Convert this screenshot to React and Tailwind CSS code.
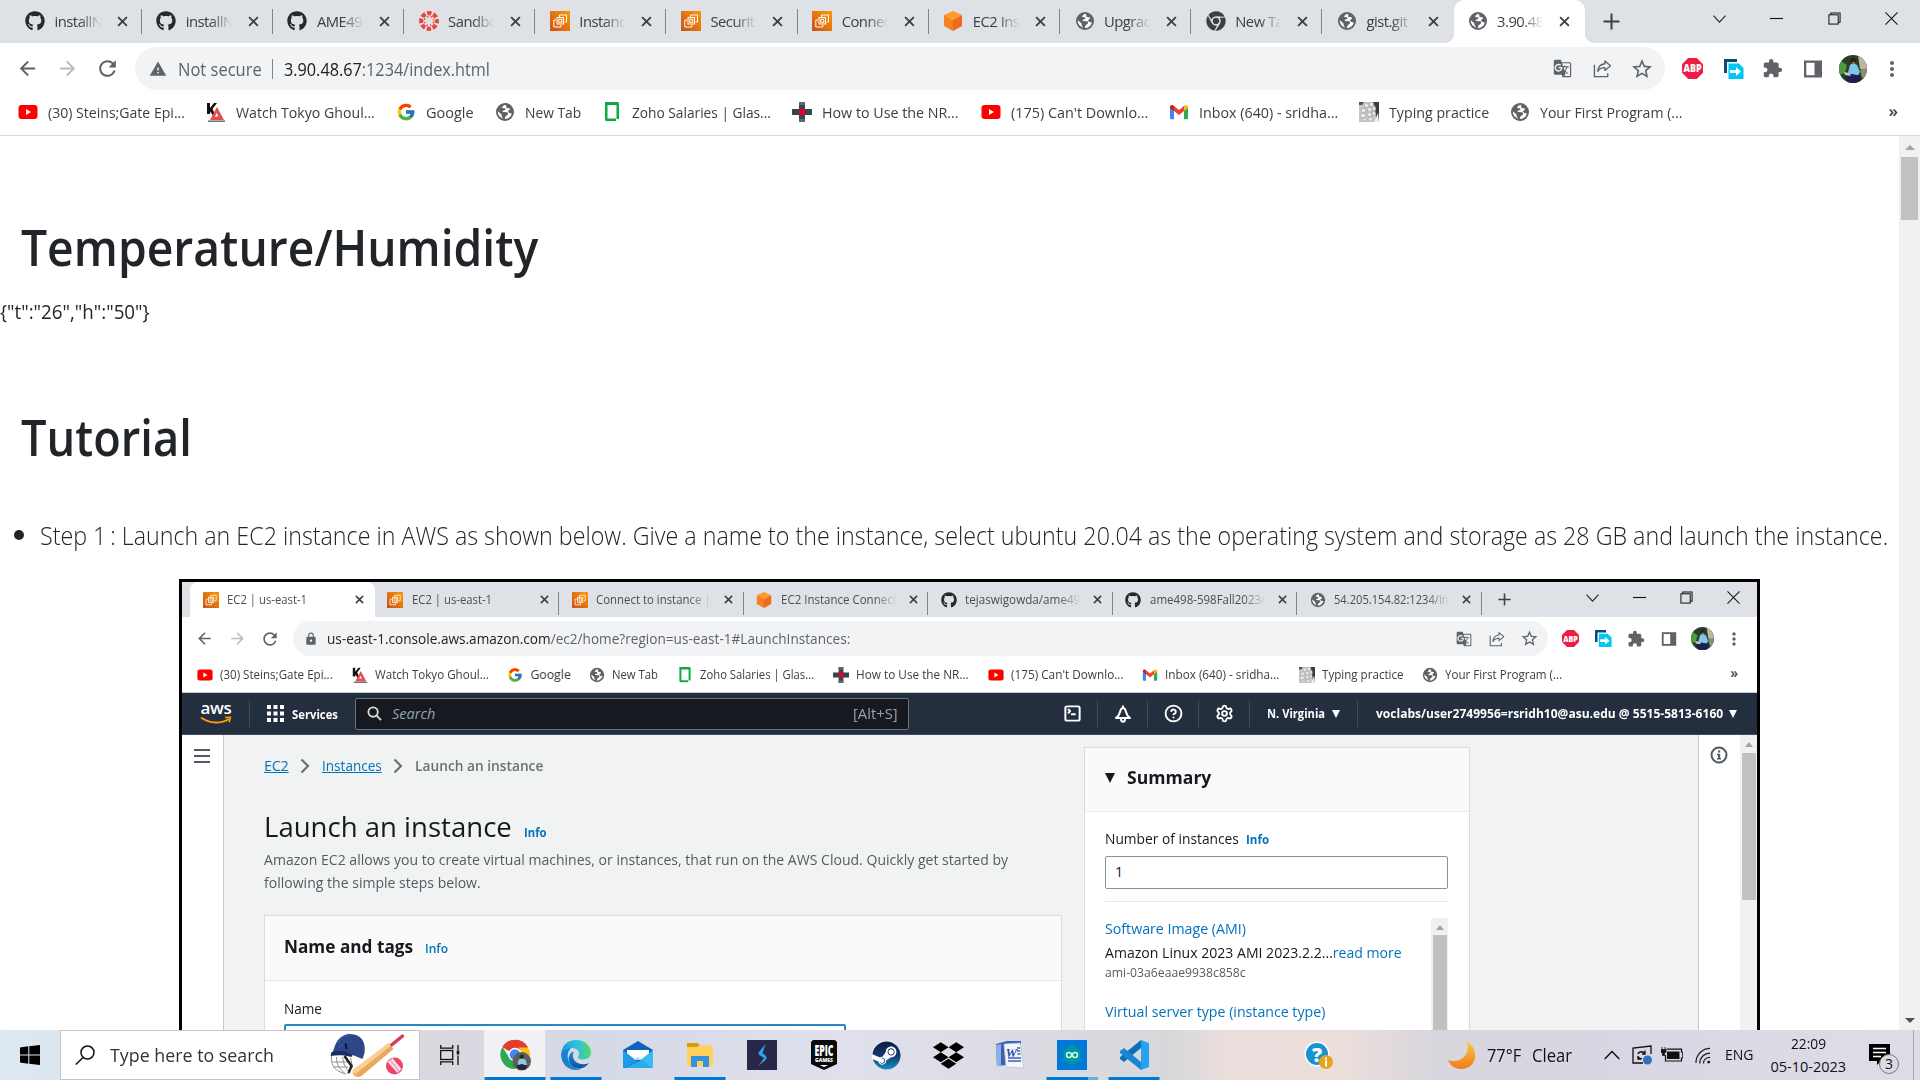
import React, { useLayoutEffect, useRef, useState } from "react";
import { MdArrowBack, MdArrowForward, MdRefresh, MdWarning, MdLock, MdMoreVert, MdStarBorder, MdExtension, MdGTranslate } from "react-icons/md";
import { FaGithub, FaChrome, FaDropbox, FaSteam } from "react-icons/fa";
import { FcGoogle } from "react-icons/fc";
import { SquareTerminal, CircleHelp, Settings } from "lucide-react";

// Single line of text condensed horizontally so that it fills `w` pixels.
function Condensed({ w, className = "", children }) {
  const ref = useRef(null);
  const [scale, setScale] = useState(1);
  useLayoutEffect(() => {
    setScale(w / ref.current.offsetWidth);
  }, [w]);
  return (
    <span className={"inline-block shrink-0 whitespace-pre " + className} style={{ width: w + "px" }}>
      <span ref={ref} className="inline-block origin-left" style={{ transform: "scaleX(" + scale + ")" }}>{children}</span>
    </span>
  );
}

/* ---------- favicons ---------- */
const Globe = ({ className }) => (
  <svg viewBox="0 0 20 20" className={className}>
    <circle cx="10" cy="10" r="9" fill="#5f6368" />
    <path d="M10.6 2.8c-2 .4-3.300 1.600-3.500 3.100l2.600.4c.8.2 1 1.200.3 1.700l-2 .8c-.6.4-.4 1.200.3 1.300l3.600.2c1.400.2 1.700 1.600.7 2.400l-2.200 1.700-.6 2.700c3.200 0 6.300-2.300 7-5.700l-2.400-.3-1.600-1.700 1.900-1.700c.5-.5.2-1.300-.5-1.400l-2.300-.3c-.7-.2-.8-1-.4-1.400z" fill="#fff" />
    <path d="M2.800 9.300l3.700 3.200.3 2.200 1.500 1.900c-3.200-.8-5.600-3.700-5.500-7.300z" fill="#fff" />
  </svg>
);
const Ec2 = ({ className }) => (
  <svg viewBox="0 0 20 20" className={className}>
    <defs>
      <linearGradient id="ec2" x1="0" y1="1" x2="1" y2="0">
        <stop offset="0" stopColor="#c8511b" />
        <stop offset="1" stopColor="#f90" />
      </linearGradient>
    </defs>
    <rect width="20" height="20" fill="url(#ec2)" />
    <g fill="none" stroke="#fff" strokeWidth="1">
      <path d="M9.500 6V4h7v7h-2" />
      <rect x="7" y="6.500" width="6.500" height="6.500" />
      <rect x="8.800" y="8.300" width="3" height="3" />
      <path d="M6 9H3.800v7h7v-2" />
    </g>
  </svg>
);
const Canvas = ({ className }) => (
  <svg viewBox="0 0 20 20" className={className}>
    <circle cx="10" cy="10" r="7.800" fill="none" stroke="#e8453c" strokeWidth="4.200" strokeDasharray="4.300 1.830" strokeDashoffset="2.100" />
    <circle cx="10" cy="10" r="4.600" fill="none" stroke="#e8453c" strokeWidth="1.400" strokeDasharray="1.400 2.210" strokeDashoffset="-1" />
  </svg>
);
const Cube = ({ className }) => (
  <svg viewBox="0 0 20 20" className={className}>
    <path d="M10 0l9 4-9 5-9-5z" fill="#ff9a2b" />
    <path d="M1 4l9 5v11l-9-5z" fill="#f58220" />
    <path d="M19 4l-9 5v11l9-5z" fill="#ef6a1b" />
  </svg>
);
const Youtube = ({ className }) => (
  <svg viewBox="0 0 20 20" className={className}>
    <rect x="0.500" y="3" width="19" height="14" rx="3" fill="#f00" />
    <path d="M8 7l5 3-5 3z" fill="#fff" />
  </svg>
);
const Ghoul = ({ className }) => (
  <svg viewBox="0 0 20 20" className={className}>
    <path d="M1 1h3v5l4-5h3L6.500 7l3 6H6.500L4.500 9.500 4 12H1z" fill="#111" />
    <path d="M11 5l7 13H4z" fill="#e2504e" />
    <path d="M10.500 11l2 3-3.500 1z" fill="#fff" />
    <path d="M2 18.500h17v1.300H2z" fill="#555" />
  </svg>
);
const Glassdoor = ({ className }) => (
  <svg viewBox="0 0 20 20" className={className}>
    <path d="M3 2v15.500c0 .8.600 1.500 1.500 1.500H14v-2.500H5.500V2z" fill="#0caa41" />
    <path d="M5 0h10.500c.8 0 1.500.7 1.500 1.500V17h-2.500V3H5z" fill="#0caa41" />
    <path d="M3 0h12v2.500H3z" fill="#0caa41" />
  </svg>
);
const Nrf = ({ className }) => (
  <svg viewBox="0 0 20 20" className={className}>
    <path d="M7 0h6v7h7v6h-7v7H7v-7H0V7h7z" fill="#36454f" />
    <path d="M7 0h6v3H7zM7 17h6v3H7z" fill="#5b6b75" />
    <rect x="7" y="7" width="6" height="6" fill="#e4002b" />
  </svg>
);
const Gmail = ({ className }) => (
  <svg viewBox="0 0 20 20" className={className}>
    <path d="M1 5v11c0 .8.500 1.200 1.200 1.200H5V8z" fill="#4285f4" />
    <path d="M19 5v11c0 .8-.5 1.200-1.200 1.200H15V8z" fill="#34a853" />
    <path d="M5 4l5 4 5-4v5l-5 4-5-4z" fill="#ea4335" />
    <path d="M1 5.200C1 3.200 3 2.500 4.300 3.500L5 4v5L1 6z" fill="#c5221f" />
    <path d="M19 5.200c0-2-2-2.700-3.300-1.700L15 4v5l4-3z" fill="#fbbc04" />
  </svg>
);
const Keyboard = ({ className }) => (
  <svg viewBox="0 0 20 20" className={className}>
    <rect width="20" height="20" fill="#c9c9c9" />
    <path d="M14 0h6v20h-2z" fill="#3b3b3b" />
    <path d="M19 11l1 9h-5z" fill="#eee" />
    <path d="M0 0h5L3 3H0z" fill="#555" />
    <g fill="#e8e8e8" stroke="#a0a0a0" strokeWidth=".6">
      <path d="M5 2l4-1 1 4-4 1zM10 1l4-1 1 4-4 1zM2 7l4-1 1 4-4 1zM8 6l4-1 1 4-4 1zM13 5l3-1 1 4-3 1zM1 12l5-1 1 4-5 1zM8 11l4-1 1 4-4 1zM13 10l3-1 1 4-3 1zM3 17l4-1 1 3H3zM9 16l4-1 1 4H9z" />
    </g>
  </svg>
);
const ChromeDark = ({ className }) => <FaChrome className={className} color="#3c4043" />;
const Octocat = ({ className }) => <FaGithub className={className} color="#24292f" />;

/* ---------- chrome pieces ---------- */
const Close = ({ className }) => (
  <svg viewBox="0 0 10 10" className={className}>
    <path d="M1 1l8 8M9 1l-8 8" stroke="#3c4043" strokeWidth="1.700" />
  </svg>
);
const Share = ({ className }) => (
  <svg viewBox="0 0 20 20" className={className} fill="none" stroke="#5f6368" strokeWidth="1.400">
    <path d="M1.500 6v12.500h14V15" />
    <path d="M12.500 2l6 5-6 5V9C9 9 6.500 10.500 5 13c.3-4.500 3-7.500 7.500-8z" strokeLinejoin="round" />
  </svg>
);
const Abp = ({ className }) => (
  <svg viewBox="0 0 22 22" className={className}>
    <path d="M6.500 0h9L22 6.500v9L15.500 22h-9L0 15.500v-9z" fill="#ed1e45" />
    <text x="11" y="15" textAnchor="middle" fontFamily="Open Sans" fontWeight="800" fontSize="11" textLength="19" lengthAdjust="spacingAndGlyphs" fill="#fff">ABP</text>
  </svg>
);
const Transfer = ({ className }) => (
  <svg viewBox="0 0 20 20" className={className}>
    <path d="M0 0h13v3H3v11H0z" fill="#0b4a7a" />
    <path d="M4.500 4.500H15l4.500 4.500V20h-15z" fill="#00c8f0" />
    <path d="M6 11h6V8l5 4.500-5 4.500v-3H6z" fill="#fff" />
  </svg>
);
const SidePanel = ({ className }) => (
  <svg viewBox="0 0 20 20" className={className}>
    <path d="M1 1.500h18v17H1z" fill="#5f6368" />
    <path d="M3.300 3.800h8.200v12.400H3.300z" fill="#fff" />
  </svg>
);
const Avatar = ({ className }) => (
  <svg viewBox="0 0 28 28" className={className}>
    <defs><clipPath id="av"><circle cx="14" cy="14" r="14" /></clipPath></defs>
    <g clipPath="url(#av)">
      <rect width="28" height="28" fill="#26402a" />
      <path d="M19 0h9v15l-7-1z" fill="#b9b7a0" />
      <path d="M0 5l8 5-2 8-6 2z" fill="#4f9a3c" />
      <path d="M21 15l7-2v9l-5 1z" fill="#8d8a77" />
      <path d="M11 10l3-2 4 2 3 7-2 3-7 .5-3-3z" fill="#7cc6ea" />
      <circle cx="14" cy="5.500" r="2.800" fill="#2e211d" />
      <path d="M13 7h3v2h-3z" fill="#9a6b52" />
      <path d="M6 21l7-2 9 2-1 7H8z" fill="#1b2050" />
      <path d="M5 17l5 1 2 3-6-1z" fill="#d9c7b8" />
    </g>
  </svg>
);
const Restore = ({ className }) => (
  <svg viewBox="0 0 14 14" className={className} fill="none" stroke="#111" strokeWidth="1.100">
    <rect x="1" y="3" width="10" height="10" />
    <path d="M3 3V1h10v10h-2" />
  </svg>
);
function WindowButtons({ small }) {
  return (
    <div className={small ? "ml-auto mr-[17px] mt-[8px] flex h-[14px] items-center gap-[34px]" : "ml-auto mr-[22px] mt-[11px] flex h-[14px] items-center gap-[44.300px]"}>
      <svg viewBox="0 0 14 14" className="w-[13px]" fill="none" stroke="#222" strokeWidth="1.100"><path d="M.5 4l6.500 7 6.500-7" /></svg>
      <svg viewBox="0 0 14 14" className="w-[13px]"><path d="M0 7h14" stroke="#111" strokeWidth="1.200" /></svg>
      <Restore className="w-[13px]" />
      <svg viewBox="0 0 14 14" className="w-[13px]" fill="none" stroke="#111" strokeWidth="1.100"><path d="M.5.5l13 13M13.500.5l-13 13" /></svg>
    </div>
  );
}

const bookmarks = [
  [Youtube, "(30) Steins;Gate Epi...", 137, 113],
  [Ghoul, "Watch Tokyo Ghoul...", 138.500, 114],
  [FcGoogle, "Google", 48, 40],
  [Globe, "New Tab", 56, 46],
  [Glassdoor, "Zoho Salaries | Glas...", 139, 114.500],
  [Nrf, "How to Use the NR...", 137, 113],
  [Youtube, "(175) Can't Downlo...", 137, 113],
  [Gmail, "Inbox (640) - sridha...", 139, 114.500],
  [Keyboard, "Typing practice", 100, 82],
  [Globe, "Your First Program (...", 142, 117],
];
function Bookmarks({ small }) {
  return (
    <div className={small ? "flex h-[37px] items-center border-b border-[#c8cbd0] pl-[15px] pr-[19px] pt-px text-[12.300px] text-[#3c4043]" : "flex h-[46px] items-center border-b border-[#d5d7da] pb-[2px] pl-[18px] pr-[22px] text-[14.800px] text-[#3c4043]"}>
      {bookmarks.map(([Icon, label, w, ws], i) => (
        <div key={i} className={small ? "mr-[18.700px] flex shrink-0 items-center gap-[7px]" : "mr-[21.200px] flex shrink-0 items-center gap-[10px]"}>
          <Icon className={small ? "size-[16px]" : "size-[20px]"} />
          <Condensed w={small ? ws : w} className="leading-[20px]">{label}</Condensed>
        </div>
      ))}
      <span className={small ? "mb-[3px] ml-auto text-[14px] font-semibold leading-none" : "mb-[3px] ml-auto text-[17px] font-semibold leading-none"}>»</span>
    </div>
  );
}

const tabs = [
  [Octocat, "installN"], [Octocat, "installN"], [Octocat, "AME49"], [Canvas, "Sandbo"], [Ec2, "Instanc"], [Ec2, "Security"],
  [Ec2, "Connec"], [Cube, "EC2 Ins"], [Globe, "Upgrad"], [ChromeDark, "New Ta"], [Globe, "gist.git"], [Globe, "3.90.48"],
];
function TabStrip() {
  return (
    <div className="flex h-[43px] bg-[#dee1e6] pl-[10.500px]">
      {tabs.map(([Icon, label], i) => {
        const active = i === 11;
        return (
          <div key={i} className={"relative flex h-[43px] w-[131.200px] shrink-0 items-center pb-px " + (active ? "rounded-t-[10px] bg-white pl-[14px]" : "pl-[14.500px]")}>
            {active && <span className="absolute -left-[10px] bottom-0 size-[10px] bg-[radial-gradient(circle_at_0_0,#dee1e6_10px,white_10.500px)]" />}
            {active && <span className="absolute -right-[10px] bottom-0 size-[10px] bg-[radial-gradient(circle_at_100%_0,#dee1e6_10px,white_10.500px)]" />}
            <Icon className="size-[20px] shrink-0" />
            <span className="-mt-px ml-[9.500px] w-[49px] overflow-hidden whitespace-pre text-[14.800px] leading-[22px] tracking-[-0.500px] text-[#3c4043] [mask-image:linear-gradient(to_right,black_50%,transparent_95%)]">{label}</span>
            <Close className="ml-[13px] size-[11px] shrink-0" />
            {i < 10 && <span className="absolute right-0 top-[9px] h-[25px] w-px bg-[#80868b]" />}
          </div>
        );
      })}
      <svg viewBox="0 0 16 16" className="ml-[18px] mt-[13px] size-[17px] shrink-0"><path d="M8 .5v15M.5 8h15" stroke="#3c4043" strokeWidth="1.900" /></svg>
      <WindowButtons />
    </div>
  );
}
function Toolbar() {
  return (
    <div className="flex h-[47px] items-center bg-white pt-[4px] text-[#5f6368]">
      <MdArrowBack className="ml-[16px] size-[23px] shrink-0" />
      <MdArrowForward className="ml-[17px] size-[23px] shrink-0 text-[#babcbe]" />
      <MdRefresh className="ml-[16px] size-[25px] shrink-0" />
      <div className="ml-[15px] flex h-[43px] w-[1530px] shrink-0 items-center rounded-full bg-[#f1f3f4] pl-[14px] text-[17.500px]">
        <MdWarning className="mt-px size-[18px]" />
        <Condensed w={84} className="ml-[11px] mt-px">Not secure</Condensed>
        <span className="ml-[10px] h-[20px] w-px bg-[#80868b]" />
        <Condensed w={206} className="ml-[11px] mt-px"><span className="text-[#202124]">3.90.48.67</span>:1234/index.html</Condensed>
        <MdGTranslate className="ml-auto size-[19px]" />
        <Share className="ml-[21px] size-[19px]" />
        <MdStarBorder className="ml-[18px] mr-[11px] size-[24px]" />
      </div>
      <Abp className="ml-[17px] size-[21px] shrink-0" />
      <Transfer className="ml-[20.500px] size-[20px] shrink-0" />
      <MdExtension className="ml-[18.500px] size-[21px] shrink-0" />
      <SidePanel className="ml-[19.500px] size-[20px] shrink-0" />
      <Avatar className="ml-[16.500px] size-[28px] shrink-0" />
      <MdMoreVert className="ml-[13px] size-[24px] shrink-0" />
    </div>
  );
}

/* ---------- embedded console capture ---------- */
const innerTabs = [
  [Ec2, "EC2 | us-east-1", 80], [Ec2, "EC2 | us-east-1", 80], [Ec2, "Connect to instance |", 115], [Cube, "EC2 Instance Connect", 116],
  [Octocat, "tejaswigowda/ame49", 115], [Octocat, "ame498-598Fall2023/", 115], [Globe, "54.205.154.82:1234/in", 115],
];
function InnerTabs() {
  return (
    <div className="flex h-[35px] bg-[#dee1e6] pl-[8px]">
      {innerTabs.map(([Icon, label, w], i) => (
        <div key={i} className={"relative flex h-[35px] w-[184.500px] shrink-0 items-center pl-[12.500px] " + (i === 0 ? "rounded-t-[8px] bg-white" : "")}>
          <Icon className="size-[16px] shrink-0" />
          <span className={"ml-[8.500px] flex w-[116px] overflow-hidden text-[12.300px] leading-[20px] text-[#4b4f54] " + (i > 1 ? "[mask-image:linear-gradient(to_right,black_80%,transparent)]" : "")}><Condensed w={w}>{label}</Condensed></span>
          <Close className="ml-[12px] size-[9px] shrink-0" />
          {i > 0 && <span className="absolute right-0 top-[10px] h-[23px] w-px bg-[#80868b]" />}
        </div>
      ))}
      <svg viewBox="0 0 16 16" className="ml-[16px] mt-[11px] size-[13px] shrink-0"><path d="M8 .5v15M.5 8h15" stroke="#3c4043" strokeWidth="1.900" /></svg>
      <WindowButtons small />
    </div>
  );
}
function InnerToolbar() {
  return (
    <div className="flex h-[39px] items-center bg-white pt-[4px] text-[#5f6368]">
      <MdArrowBack className="ml-[13px] size-[19px] shrink-0" />
      <MdArrowForward className="ml-[14px] size-[19px] shrink-0 text-[#babcbe]" />
      <MdRefresh className="ml-[13px] size-[20px] shrink-0" />
      <div className="ml-[13px] flex h-[35px] w-[1255px] shrink-0 items-center rounded-full bg-[#f1f3f4] pl-[11px] text-[14.500px]">
        <MdLock className="size-[14px]" />
        <Condensed w={523} className="ml-[9px] mt-px"><span className="text-[#202124]">us-east-1.console.aws.amazon.com</span>/ec2/home?region=us-east-1#LaunchInstances:</Condensed>
        <MdGTranslate className="ml-auto size-[16px]" />
        <Share className="ml-[17px] size-[16px]" />
        <MdStarBorder className="ml-[15px] mr-[9px] size-[19px]" />
      </div>
      <Abp className="ml-[14px] size-[17px] shrink-0" />
      <Transfer className="ml-[16px] size-[17px] shrink-0" />
      <MdExtension className="ml-[14.500px] size-[18px] shrink-0" />
      <SidePanel className="ml-[16px] size-[16px] shrink-0" />
      <Avatar className="ml-[14px] size-[23px] shrink-0" />
      <MdMoreVert className="ml-[10px] size-[20px] shrink-0" />
    </div>
  );
}
const Sep = ({ className }) => <span className={"h-[26px] w-px shrink-0 bg-[#414d5c] " + className} />;
const Tri = ({ className }) => <svg viewBox="0 0 10 10" className={"shrink-0 " + className}><path d="M0 0h10L5 10z" fill="currentColor" /></svg>;
function AwsNav() {
  return (
    <div className="flex h-[42px] items-center border-b border-[#414d5c] bg-[#232f3e] text-white">
      <div className="ml-[17px] flex w-[34px] shrink-0 flex-col items-center">
        <span className="h-[14px] text-[17px] font-semibold leading-[11px] tracking-[-0.400px]">aws</span>
        <svg viewBox="0 0 32 9" className="h-[9px] w-[32px]" fill="none" stroke="#f90" strokeWidth="2"><path d="M1 1.500c9 6.500 20 6.500 28 1.500" /><path d="M25 1.500l5.500-.3-1.300 5" strokeWidth="1.500" /></svg>
      </div>
      <Sep className="ml-[16px]" />
      <svg viewBox="0 0 17 17" className="ml-[17px] size-[17px] shrink-0" fill="#fff"><path d="M0 0h4v4H0zM6.500 0h4v4h-4zM13 0h4v4h-4zM0 6.500h4v4H0zM6.500 6.500h4v4h-4zM13 6.500h4v4h-4zM0 13h4v4H0zM6.500 13h4v4h-4zM13 13h4v4h-4z" /></svg>
      <Condensed w={46} className="ml-[8px] mt-[2px] text-[13px] font-bold">Services</Condensed>
      <div className="ml-[17px] flex h-[32px] w-[554px] shrink-0 items-center rounded-[2px] border border-[#687078] bg-[#16191f] pl-[11px] pr-[10px] text-[#95a5a6]">
        <svg viewBox="0 0 16 16" className="size-[15px]" fill="none" stroke="#d5dbdb" strokeWidth="2"><circle cx="6.500" cy="6.500" r="5" /><path d="M10 10l5 5" /></svg>
        <Condensed w={43} className="ml-[10px] text-[14.500px] italic">Search</Condensed>
        <Condensed w={45} className="ml-auto text-[14.500px]">[Alt+S]</Condensed>
      </div>
      <SquareTerminal className="ml-[153.500px] size-[19px] shrink-0" strokeWidth={2.500} />
      <Sep className="ml-[15px]" />
      <svg viewBox="0 0 18 18" className="ml-[16px] size-[18px] shrink-0" fill="none" stroke="#fff" strokeWidth="2"><path d="M9 .5v2M9 3c2 0 2.500 1.500 3 4 .5 3 1.500 4 4 6H2c2.500-2 3.500-3 4-6 .5-2.500 1-4 3-4z" strokeLinejoin="round" /><path d="M7 14c0 3.500 4 3.500 4 0" /></svg>
      <Sep className="ml-[15px]" />
      <CircleHelp className="ml-[16.500px] size-[19px] shrink-0" strokeWidth={2.400} />
      <Sep className="ml-[15px]" />
      <Settings className="ml-[16px] size-[19px] shrink-0" strokeWidth={2.400} />
      <Sep className="ml-[15px]" />
      <Condensed w={58} className="ml-[17px] mt-[2px] text-[12.500px] font-bold">N. Virginia</Condensed>
      <Tri className="ml-[6.500px] size-[8px]" />
      <Sep className="ml-[17px]" />
      <Condensed w={347} className="ml-[18.500px] mt-[2px] text-[12.500px] font-bold">voclabs/user2749956=rsridh10@asu.edu @ 5515-5813-6160</Condensed>
      <Tri className="ml-[6px] size-[8px]" />
    </div>
  );
}
const Crumb = ({ className }) => (
  <svg viewBox="0 0 10 16" className={"h-[16px] w-[10px] shrink-0 " + className} fill="none" stroke="#687078" strokeWidth="2.200"><path d="M1.500 1.500L8 8l-6.500 6.500" /></svg>
);
function ConsoleMain() {
  return (
    <div className="flex h-[320px] overflow-hidden bg-[#f1f3f3] text-[#16191f]">
      <div className="flex w-[42px] shrink-0 justify-center border-r border-[#c8cccf] bg-white pt-[14px]">
        <svg viewBox="0 0 16 14" className="mr-px h-[14px] w-[16px]"><path d="M0 1h16M0 7h16M0 13h16" stroke="#545b64" strokeWidth="2" /></svg>
      </div>
      <div className="ml-[40px] flex w-[798px] shrink-0 flex-col">
        <div className="mt-[20px] flex h-[22px] items-center text-[14px] text-[#0073bb]">
          <Condensed w={25} className="[&>span]:underline">EC2</Condensed>
          <Crumb className="ml-[11px]" />
          <Condensed w={60} className="ml-[12px] [&>span]:underline">Instances</Condensed>
          <Crumb className="ml-[11px]" />
          <Condensed w={128.500} className="ml-[12px] font-semibold text-[#687078]">Launch an instance</Condensed>
        </div>
        <div className="mt-[31px] flex h-[38px] items-baseline leading-[38px]">
          <Condensed w={248} className="text-[28px]">Launch an instance</Condensed>
          <Condensed w={23} className="ml-[12px] text-[12.300px] font-bold text-[#0073bb]">Info</Condensed>
        </div>
        <div className="mt-[4px] flex flex-col text-[14.500px] leading-[22.500px] text-[#545b64]">
          <Condensed w={744} className="self-start">Amazon EC2 allows you to create virtual machines, or instances, that run on the AWS Cloud. Quickly get started by</Condensed>
          <Condensed w={217} className="self-start">following the simple steps below.</Condensed>
        </div>
        <div className="mt-[21px] h-[160px] shrink-0 border border-b-0 border-[#d9dddd] bg-white">
          <div className="flex h-[65px] items-center border-b border-[#e4e8e8] bg-[#fafafa] pb-[3px] pl-[19px]">
            <div className="flex items-baseline">
              <Condensed w={129} className="text-[18px] font-bold">Name and tags</Condensed>
              <Condensed w={23.500} className="ml-[12px] text-[12.300px] font-semibold text-[#0073bb]">Info</Condensed>
            </div>
          </div>
          <div className="flex flex-col pl-[19px] pt-[17px]">
            <Condensed w={38} className="self-start text-[14.300px] leading-[22px]">Name</Condensed>
            <div className="mt-[4px] h-[32px] w-[562px] shrink-0 rounded-[2px] border-2 border-[#2a86c7] bg-white" />
          </div>
        </div>
      </div>
      <div className="ml-[22px] mt-[12px] h-[330px] w-[386px] shrink-0 border border-[#d9dddd] bg-white">
        <div className="flex h-[64px] items-center border-b border-[#e9ecec] bg-[#fafafa] pl-[20px]">
          <Tri className="mt-[-3px] size-[10px]" />
          <Condensed w={84} className="ml-[11.500px] mt-[-4px] text-[18px] font-bold">Summary</Condensed>
        </div>
        <div className="flex flex-col px-[20px] pt-[16px] text-[14.300px]">
          <div className="flex h-[22px] items-baseline leading-[22px]">
            <Condensed w={134}>Number of instances</Condensed>
            <Condensed w={23.500} className="ml-[7px] text-[12.300px] font-bold text-[#0073bb]">Info</Condensed>
          </div>
          <div className="mt-[6px] flex h-[33px] w-[343px] items-center rounded-[2px] border border-[#879596] pb-px pl-[9px]">1</div>
          <div className="mt-[12px] h-px w-[343px] bg-[#e4e8e8]" />
          <div className="mt-[16px] flex w-[343px] justify-between">
            <div className="flex flex-col">
              <Condensed w={141} className="self-start leading-[22px] text-[#0073bb]">Software Image (AMI)</Condensed>
              <Condensed w={297} className="mt-[2px] self-start leading-[22px]">Amazon Linux 2023 AMI 2023.2.2...<span className="text-[#0073bb]">read more</span></Condensed>
              <Condensed w={141} className="self-start text-[12.300px] leading-[18px] text-[#545b64]">ami-03a6eaae9938c858c</Condensed>
              <Condensed w={220} className="mt-[19px] self-start leading-[22px] text-[#0073bb]">Virtual server type (instance type)</Condensed>
            </div>
            <div className="flex h-[150px] w-[17px] flex-col items-center bg-[#f1f1f1] pt-[7px]">
              <div className="size-0 border-x-[4px] border-b-[5px] border-x-transparent border-b-[#a3a3a3]" />
              <div className="mt-[5px] w-[14px] grow bg-[#c1c1c1]" />
            </div>
          </div>
        </div>
      </div>
      <div className="ml-auto flex w-[42px] shrink-0 justify-center border-l border-[#c8cccf] bg-white pt-[11px]">
        <svg viewBox="0 0 18 18" className="mr-px size-[18px]"><circle cx="9" cy="9" r="7.500" fill="none" stroke="#545b64" strokeWidth="2" /><path d="M8 4.500h2.200v2H8zM7 7.800h3.200V12H11v1.500H7V12h1V9.300H7z" fill="#545b64" /></svg>
      </div>
      <div className="flex w-[17px] shrink-0 flex-col items-center bg-[#f1f1f1] pt-[7px]">
        <div className="size-0 border-x-[4px] border-b-[5px] border-x-transparent border-b-[#a3a3a3]" />
        <div className="mt-[6px] h-[147px] w-[14px] bg-[#c1c1c1]" />
      </div>
    </div>
  );
}

/* ---------- taskbar ---------- */
const Bar = ({ className = "w-[51px]" }) => <span className={"absolute bottom-0 left-1/2 h-[3px] -translate-x-1/2 bg-[#0078d7] " + className} />;
const TaskCell = ({ children, bar, cell = "w-[62px]" }) => (
  <div className={"relative flex h-[50px] shrink-0 items-center justify-center " + cell}>{children}{bar}</div>
);
function Taskbar() {
  return (
    <div className="flex h-[50px] shrink-0 items-center overflow-hidden bg-[linear-gradient(to_right,#dde8f2_0,#d9d9e0_440px,#d6dae6_600px,#dfe0ec_850px,#d9dadf_1080px,#d6d8da_1170px,#ecdedc_1230px,#ecdedb_1340px,#d9d6dd_1430px,#d8d6e2_1600px,#dddde8_1920px)] text-[#111]">
      <svg viewBox="0 0 20 20" className="ml-[20px] size-[20px] shrink-0"><path d="M0 2.500L8.300 1.300V9.500H0zM9.300 1.200L20 0v9.500H9.300zM0 10.500h8.300v8.200L0 17.500zM9.300 10.500H20V20L9.300 18.800z" /></svg>
      <div className="ml-[20px] flex h-[50px] w-[360px] shrink-0 items-center border border-[#c4c4c8] bg-white pl-[14px]">
        <svg viewBox="0 0 20 20" className="size-[20px]" fill="none" stroke="#111" strokeWidth="1.500"><circle cx="12.500" cy="7.500" r="6.500" /><path d="M8 12.500L.8 19.500" /></svg>
        <Condensed w={164} className="ml-[15px] text-[18.700px] text-[#333]">Type here to search</Condensed>
        <svg viewBox="0 0 76 44" className="ml-[55px] h-[44px] w-[77px]">
          <g fill="none" stroke="#8d8f90" strokeWidth="1"><path d="M2 23c-1 10 4 15 14 18M7 24c0 8 3 12 9 17M13 24c1 6 2 10 6 14M3 29h17M4 34h15M21 25l2 9-5 7" /></g>
          <path d="M15 23l7 10-3 7" fill="none" stroke="#222" strokeWidth="2.500" />
          <path d="M3 20C5 16 6 3 19 1c12-1 18 8 16 19l-2 6-10-4z" fill="#2d4688" />
          <path d="M9 10c2-5 6-8 12-8M10 14c4-4 8-6 13-5" fill="none" stroke="#4059a0" strokeWidth="1.200" />
          <path d="M2 19c8-2 14-1 21 3l-1 2C15 22 8 22 1 23z" fill="#1b2d62" />
          <path d="M16 10l1 6" stroke="#0c1533" strokeWidth="2" />
          <path d="M62 12l11-9" stroke="#d93a57" strokeWidth="3.500" strokeLinecap="round" />
          <path d="M59 10l5 6-32 27c-4 2-8 1-9-4z" fill="#e9a85c" />
          <path d="M59 10l2 3-35 28c-2-1-3-2-3-4z" fill="#f9cf96" />
          <circle cx="65" cy="33" r="8.500" fill="#ef4565" />
          <path d="M58 29l5-4 9 11-4 4z" fill="#f7dcea" />
          <path d="M61 27l9 12" stroke="#d44a86" strokeWidth=".6" />
        </svg>
      </div>
      <svg viewBox="0 0 20 20" className="ml-[20px] size-[20px] shrink-0" fill="none" stroke="#111" strokeWidth="1.300"><path d="M.7 0v3.200h12V0M.7 20v-3.200h12V20" /><rect x=".7" y="5.500" width="12" height="9" /><path d="M18 0v5M18 10.500V20" /><path d="M18 5.500v4" strokeWidth="2.600" /></svg>
      <TaskCell cell="ml-[24px] w-[61px] bg-[#f1f0f3]" bar={<Bar className="w-full" />}>
        <svg viewBox="0 0 32 32" className="ml-[2px] size-[32px]">
          <path d="M15 15L2.500 8A14.500 14.500 0 0 1 28 8.500z" fill="#ea4335" />
          <path d="M15 1a14.500 14.500 0 0 1 13 7.500H15L9 12 2.500 8A14.500 14.500 0 0 1 15 1z" fill="#e33b2e" />
          <path d="M28 8.500A14.500 14.500 0 0 1 15 30l6.500-12L19 8.500z" fill="#fbc116" />
          <path d="M2.500 8A14.500 14.500 0 0 0 15 30l6-10.500-11 .5z" fill="#2da94f" />
          <circle cx="15" cy="15.500" r="6.800" fill="#fff" /><circle cx="15" cy="15.500" r="5.300" fill="#4285f4" />
          <g transform="translate(12.500 13) scale(.66)"><circle cx="14" cy="14" r="14" fill="#5c5f57" /><path d="M9 12l5-3 6 3 2 8-9 1-5-2z" fill="#8cc9e6" /><circle cx="14" cy="7" r="3.300" fill="#2e2622" /><path d="M5 21l9-3 9 3-4 6h-9z" fill="#22263b" /></g>
        </svg>
      </TaskCell>
      <TaskCell bar={<Bar />}>
        <svg viewBox="0 0 30 30" className="size-[30px]">
          <defs>
            <linearGradient id="e1" x1="0" y1="0" x2="1" y2="0"><stop offset="0" stopColor="#1a9be0" /><stop offset=".55" stopColor="#2fc2df" /><stop offset="1" stopColor="#54d865" /></linearGradient>
            <linearGradient id="e2" x1="0" y1="0" x2="0" y2="1"><stop offset="0" stopColor="#1b8fd8" /><stop offset="1" stopColor="#0e4f9e" /></linearGradient>
          </defs>
          <path d="M0 14C1 5 7 0 15 0c9 0 15 6 15 12.500 0 5-4 7-8 7s-5-1.500-5-2.500 1-1.500 1-4c0-3-4-5-8-5S2 10 0 14z" fill="url(#e1)" />
          <path d="M0 14c2-5 6-6 10-6-2 2-4 5-3 11s7 11 13 10c-2 1-4 1-5 1C6 30 0 23 0 14z" fill="#1584d4" />
          <path d="M11 12c-4 3-5 9 0 14 5 4 12 4 17-3-7 3-15 0-16-6-.2-2 0-3.500 1-5z" fill="url(#e2)" />
        </svg>
      </TaskCell>
      <TaskCell>
        <svg viewBox="0 0 30 30" className="size-[30px]"><path d="M0 10L15 1l15 9v18H0z" fill="#0b64b8" /><path d="M4 10h22v10H4z" fill="#fff" /><path d="M0 10l15 12L0 28z" fill="#1e9be9" /><path d="M30 10L15 22l-13 6h28z" fill="#35bdf5" /><path d="M0 28l15-11 15 11z" fill="#1a8fe0" opacity=".35" /></svg>
      </TaskCell>
      <TaskCell bar={<Bar />}>
        <svg viewBox="0 0 28 30" className="h-[30px] w-[28px]"><path d="M1 3h11l2 3h-2v3H1z" fill="#dd9b0c" /><path d="M1 7h12l1-1.500h13V26H1z" fill="#ffd05c" /><path d="M5 16h18v11h-6v-6h-6v6H5z" fill="#3591de" /></svg>
      </TaskCell>
      <TaskCell>
        <svg viewBox="0 0 30 30" className="size-[30px]"><rect width="30" height="30" fill="#292648" /><path d="M18.500 4l-6.500 8c-1 1.500-.5 2.500 1 3.500l4 2.500-5.500 8 7-6c1.500-1.500 1.500-3 0-4.500l-3-2.500z" fill="#27a5f2" /></svg>
      </TaskCell>
      <TaskCell>
        <svg viewBox="0 0 26 30" className="h-[30px] w-[26px]"><path d="M2 0h22l2 2v22l-13 6-13-6V2z" fill="#0a0a0a" /><text x="13" y="15.500" textAnchor="middle" fill="#fff" fontFamily="Open Sans" fontWeight="800" fontSize="15" textLength="19" lengthAdjust="spacingAndGlyphs">EPIC</text><text x="13" y="22" textAnchor="middle" fill="#fff" fontFamily="Open Sans" fontWeight="800" fontSize="5.500" textLength="18" lengthAdjust="spacingAndGlyphs">GAMES</text><path d="M9 25h8l-4 2z" fill="#fff" /></svg>
      </TaskCell>
      <TaskCell>
        <div className="flex size-[28px] items-center justify-center rounded-full bg-white">
          <svg width="0" height="0" className="absolute"><defs><linearGradient id="st" x1="0" y1="0" x2="0" y2="1"><stop offset="0" stopColor="#0b1b46" /><stop offset=".5" stopColor="#123a6c" /><stop offset="1" stopColor="#1591c4" /></linearGradient></defs></svg>
          <FaSteam className="size-[29px] shrink-0" fill="url(#st)" />
        </div>
      </TaskCell>
      <TaskCell><FaDropbox className="size-[31px]" color="#000" /></TaskCell>
      <TaskCell>
        <svg viewBox="0 0 30 30" className="size-[30px]"><path d="M1 4L12 1h14v3l-15 1v20l-9 1z" fill="#3a63b5" /><path d="M1 5l5-1v22H2z" fill="#8fb0e6" /><path d="M9 4l16-1 4 25-18-1z" fill="#f4f6fb" stroke="#b8c3da" strokeWidth=".8" /><text x="10.500" y="17" fill="#2a52a5" fontFamily="Liberation Serif" fontStyle="italic" fontWeight="700" fontSize="13" textLength="11">W</text><path d="M22 8h3M22 11h3M22.500 14h3M13 18h13M13 21h13" stroke="#3a5fae" strokeWidth="1.600" /></svg>
      </TaskCell>
      <TaskCell bar={<><Bar /><span className="absolute bottom-0 right-[5px] h-[3px] w-[10px] bg-[#66aee6]" /></>}>
        <svg viewBox="0 0 30 30" className="size-[30px]"><rect width="30" height="30" fill="#0078d7" /><ellipse cx="15" cy="15" rx="9" ry="9" fill="#00979d" /><g fill="none" stroke="#d9f3f3" strokeWidth="1.500"><circle cx="12" cy="15" r="2.500" /><circle cx="18" cy="15" r="2.500" /></g></svg>
      </TaskCell>
      <TaskCell bar={<Bar />}>
        <svg viewBox="0 0 30 30" className="size-[30px]"><path d="M22 0l8 3v24l-8 3z" fill="#26a3f0" /><path d="M22 0v8L5 22l-4-3v-2z" fill="#0c71b9" /><path d="M1 11l4-3 17 14v8L1 13z" fill="#1a86d0" /></svg>
      </TaskCell>
      <svg viewBox="0 0 30 32" className="ml-[139px] h-[32px] w-[30px] shrink-0"><circle cx="13" cy="15" r="12.500" fill="#fff" /><circle cx="13" cy="15" r="11" fill="#1793d2" /><text x="13" y="22.500" textAnchor="middle" fill="#fff" fontFamily="Open Sans" fontWeight="800" fontSize="20">?</text><circle cx="22" cy="23" r="7" fill="#e9a41f" /><path d="M21 18.500h2v2h-2zM21 21.500h2v6h-2z" fill="#fff" /></svg>
      <svg viewBox="0 0 28 28" className="ml-[114px] size-[28px] shrink-0"><defs><linearGradient id="mo" x1="0" y1="0" x2="0" y2="1"><stop offset="0" stopColor="#f7c948" /><stop offset="1" stopColor="#ef7d1a" /></linearGradient></defs><path d="M19 0c13 9 10 27-5 28C7 28 2 25 0 19c11 4 23-4 19-19z" fill="url(#mo)" /></svg>
      <Condensed w={34} className="ml-[11px] text-[18.300px]">77°F</Condensed>
      <Condensed w={40} className="ml-[10.500px] text-[18.300px]">Clear</Condensed>
      <svg viewBox="0 0 16 10" className="ml-[32px] h-[10px] w-[16px] shrink-0" fill="none" stroke="#111" strokeWidth="1.400"><path d="M.7 9L8 1.500 15.300 9" /></svg>
      <svg viewBox="0 0 20 20" className="ml-[12.500px] size-[20px] shrink-0" fill="none" stroke="#111" strokeWidth="1.300"><path d="M11 18H1V3l18-2v8" /><path d="M6 9c1-3 6-3 7 0M13 5.500V9h-3M6 11v3h3M6 11.500c1 2 2.500 2.500 4 2" /><circle cx="15.500" cy="15" r="4.500" fill="#2f71bd" stroke="none" /></svg>
      <svg viewBox="0 0 22 16" className="ml-[9px] h-[16px] w-[22px] shrink-0"><path d="M6 4.500h12.500v7.500H6z" fill="#111" /><path d="M5.500 2.200h15V5h1.300v6h-1.300v3h-16V8" fill="none" stroke="#111" strokeWidth="1.200" /><path d="M1 0v2.500M4 0v2.500M0 2.500h5v3H3.500v3h-2v-3H0z" fill="#111" stroke="#111" strokeWidth=".8" /></svg>
      <svg viewBox="0 0 18 18" className="ml-[12px] size-[17px] shrink-0" fill="none" stroke="#222" strokeWidth="1.300"><path d="M1 17C1 8 8 1.500 16 1.500M5 17.500c0-6.500 5-11 11-11M9 17.500c0-4 3-6.500 7-6.500" /><circle cx="14.500" cy="16" r="1.500" fill="#111" stroke="none" /></svg>
      <Condensed w={29} className="ml-[13px] text-[14.500px]">ENG</Condensed>
      <div className="ml-[16px] flex w-[77px] shrink-0 flex-col items-center text-[14.500px] leading-[23px]">
        <Condensed w={35}>22:09</Condensed>
        <Condensed w={76}>05-10-2023</Condensed>
      </div>
      <div className="relative ml-[22px] size-[22px] shrink-0">
        <svg viewBox="0 0 22 22" className="size-[22px]"><path d="M0 0h21v17h-9l-4 4v-4H0z" fill="#000" /><path d="M4 4.500h13M4 8.500h13M4 12.500h8" stroke="#fff" strokeWidth="1.500" /></svg>
        <span className="absolute left-[10px] top-[10px] flex size-[20px] items-center justify-center rounded-full border border-[#777] bg-[#dcdbe1] text-[14px] leading-none">3</span>
      </div>
      <span className="ml-[22px] h-[50px] w-px shrink-0 bg-[#a9a9b3]" />
    </div>
  );
}

export default function App() {
  return (
    <div className="flex h-[1080px] w-[1920px] flex-col overflow-hidden bg-white font-['Open_Sans','Noto_Sans',sans-serif]">
      <TabStrip />
      <Toolbar />
      <Bookmarks />
      <div className="flex h-[894px] shrink-0">
        <main className="flex w-[1899px] flex-col items-start overflow-hidden text-[#212529]">
          <Condensed w={517} className="ml-[20.500px] mt-[81px] text-[50px] font-semibold leading-[60px]">Temperature/Humidity</Condensed>
          <Condensed w={150} className="mt-[20px] text-[19.500px] leading-[30px]">{'{"t":"26","h":"50"}'}</Condensed>
          <Condensed w={171} className="ml-[20.500px] mt-[80px] text-[50px] font-semibold leading-[60px]">Tutorial</Condensed>
          <div className="mt-[49px] flex h-[38px] shrink-0 items-center text-[25px] font-light leading-[38px]">
            <span className="ml-[14px] mr-[16px] size-[10px] rounded-full bg-[#212529]" />
            <Condensed w={1848}>Step <span className="tracking-[-1.200px]">1 </span>: Launch an EC2 instance in AWS as shown below. Give a name to the instance, select ubuntu 20.04 as the operating system and storage as 28 GB and launch the instance.</Condensed>
          </div>
          <div className="ml-[179px] mt-[25px] flex w-[1581px] shrink-0 flex-col border-[3px] border-black">
            <InnerTabs />
            <InnerToolbar />
            <Bookmarks small />
            <AwsNav />
            <ConsoleMain />
          </div>
        </main>
        <div className="flex w-[21px] flex-col items-center bg-[#f1f1f1] pb-[7px] pt-[9px]">
          <div className="size-0 border-x-[5px] border-b-[5px] border-x-transparent border-b-[#a3a3a3]" />
          <div className="mt-[7px] h-[63px] w-[17px] bg-[#c1c1c1]" />
          <div className="mt-auto size-0 border-x-[5px] border-t-[5px] border-x-transparent border-t-[#505050]" />
        </div>
      </div>
      <Taskbar />
    </div>
  );
}
